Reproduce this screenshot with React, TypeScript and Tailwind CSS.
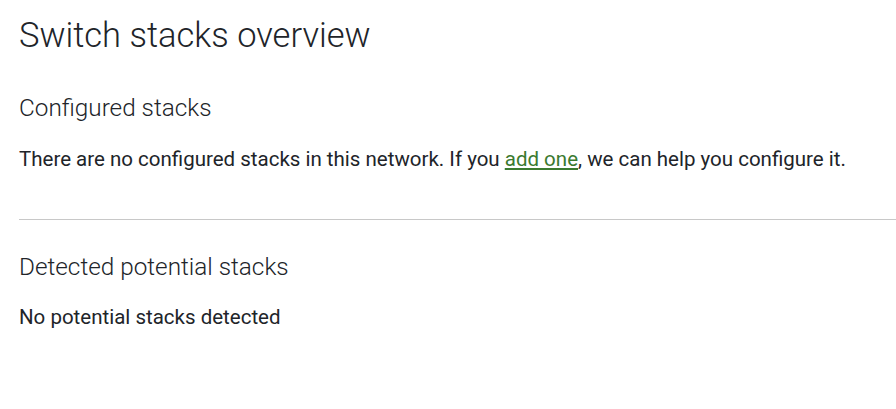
import React from "react";

export default function App() {
  return (
    <div className="w-[896px] h-[409px] bg-white text-[#212429] overflow-hidden" style={{ fontFamily: "Roboto, 'Liberation Sans', sans-serif" }}>
      <div className="pl-[19px] pt-[15px]">
        <h1 className="text-[34.5px] leading-[40px] font-light">Switch stacks overview</h1>
        <section className="mt-[39px]">
          <h2 className="text-[24.3px] leading-[28px] font-light">Configured stacks</h2>
          <p className="mt-[25px] text-[20.5px] leading-[24px]">
            There are no configured stacks in this network. If you{" "}
            <a href="#" className="text-[#3b7a30] underline underline-offset-2">add one</a>, we can help you configure it.
          </p>
        </section>
        <hr className="mt-[48px] border-0 border-t border-[#c8c8c8]" />
        <section className="mt-[33px]">
          <h2 className="text-[24.3px] leading-[28px] font-light">Detected potential stacks</h2>
          <p className="mt-[24px] text-[20.5px] leading-[24px]">No potential stacks detected</p>
        </section>
      </div>
    </div>
  );
}
